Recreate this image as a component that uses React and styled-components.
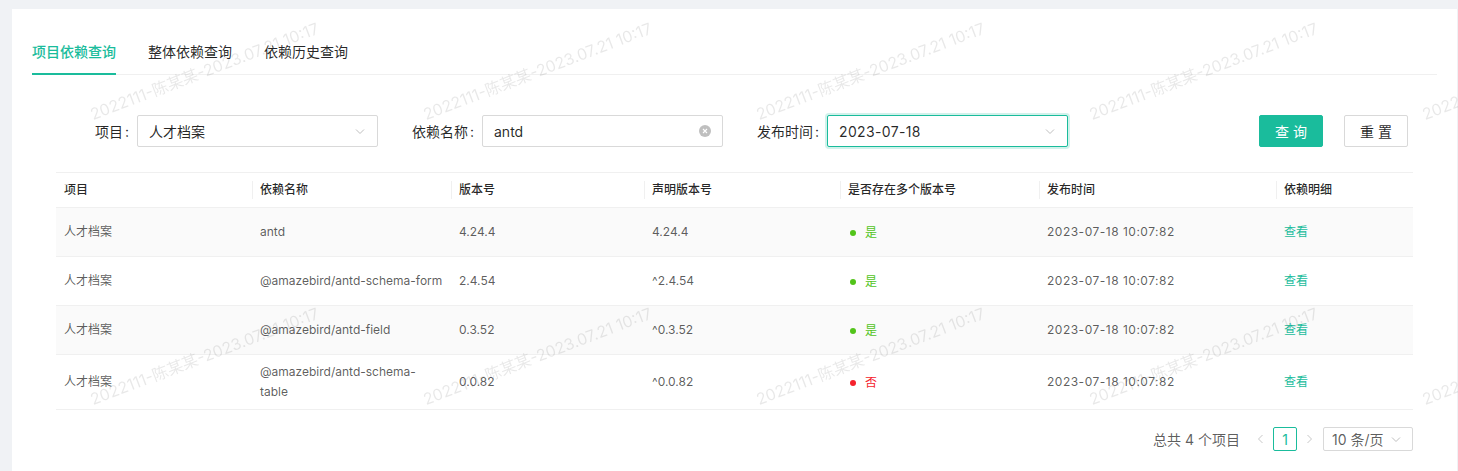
import React, { useMemo } from "react";
import styled, { createGlobalStyle } from "styled-components";

const TEAL = "#1abc9c";
const FONT = 'Inter, "Noto Sans CJK SC", sans-serif';

const GlobalStyle = createGlobalStyle`
  html, body {
    margin: 0;
    padding: 0;
    background: #f0f2f5;
    font-family: ${FONT};
    color: rgba(0, 0, 0, 0.85);
  }
  * {
    box-sizing: border-box;
  }
`;

const rows = [
  { project: "人才档案", name: "antd", version: "4.24.4", declared: "4.24.4", multi: true },
  { project: "人才档案", name: "@amazebird/antd-schema-form", version: "2.4.54", declared: "^2.4.54", multi: true },
  { project: "人才档案", name: "@amazebird/antd-field", version: "0.3.52", declared: "^0.3.52", multi: true },
  { project: "人才档案", name: "@amazebird/antd-schema-table", version: "0.0.82", declared: "^0.0.82", multi: false },
];

// name column just holds "...-form" on one line, so "...-table" breaks
const useNameWidth = () =>
  useMemo(() => {
    const ctx = document.createElement("canvas").getContext("2d");
    ctx.font = `12px ${FONT}`;
    const w = ctx.measureText("@amazebird/antd-schema-form").width;
    return Math.max(190, Math.min(204, Math.ceil(w) + 16));
  }, []);

const Chevron = ({ dir = "down", size = 12, color = "#bfbfbf" }) => {
  const d = {
    down: "M2 4.5 L6 8.5 L10 4.5",
    left: "M7.5 2 L3.5 6 L7.5 10",
    right: "M4.5 2 L8.5 6 L4.5 10",
  }[dir];
  return (
    <svg width={size} height={size} viewBox="0 0 12 12" fill="none">
      <path d={d} stroke={color} strokeWidth="1" />
    </svg>
  );
};

const ClearIcon = () => (
  <svg width="12" height="12" viewBox="0 0 12 12">
    <circle cx="6" cy="6" r="6" fill="rgba(0,0,0,0.25)" />
    <path d="M4 4 L8 8 M8 4 L4 8" stroke="#fff" strokeWidth="1.1" />
  </svg>
);

export default function App() {
  const nameWidth = useNameWidth();
  const columns = [
    { title: "项目", width: 196 },
    { title: "依赖名称", width: nameWidth },
    { title: "版本号", width: 392 - nameWidth },
    { title: "声明版本号", width: 196 },
    { title: "是否存在多个版本号", width: 199 },
    { title: "发布时间", width: 237 },
    { title: "依赖明细", width: 137 },
  ];

  const marks = [];
  for (let j = 0; j < 2; j++) {
    for (let i = 0; i < 5; i++) {
      marks.push({ left: 204 + 333 * i, top: 70 + 285 * j });
    }
  }

  return (
    <>
      <GlobalStyle />
      <Page>
        <Card>
          <TabBar>
            <Tab $active>项目依赖查询</Tab>
            <Tab>整体依赖查询</Tab>
            <Tab>依赖历史查询</Tab>
          </TabBar>

          <FilterRow>
            <FormItem>
              <Label>项目</Label>
              <Field>
                <FieldValue>人才档案</FieldValue>
                <Chevron />
              </Field>
            </FormItem>
            <FormItem>
              <Label>依赖名称</Label>
              <Field>
                <FieldValue>antd</FieldValue>
                <ClearIcon />
              </Field>
            </FormItem>
            <FormItem>
              <Label>发布时间</Label>
              <Field $focused>
                <FieldValue $spaced>2023-07-18</FieldValue>
                <Chevron />
              </Field>
            </FormItem>
            <Actions>
              <Button $primary>查 询</Button>
              <Button>重 置</Button>
            </Actions>
          </FilterRow>

          <TableWrap>
            <Table>
              <colgroup>
                {columns.map((c) => (
                  <col key={c.title} style={{ width: c.width }} />
                ))}
              </colgroup>
              <thead>
                <tr>
                  {columns.map((c, idx) => (
                    <Th key={c.title} $divider={idx > 0}>
                      {c.title}
                    </Th>
                  ))}
                </tr>
              </thead>
              <tbody>
                {rows.map((r, idx) => (
                  <Tr key={r.name} $striped={idx % 2 === 0}>
                    <Td>{r.project}</Td>
                    <Td>{r.name}</Td>
                    <Td>{r.version}</Td>
                    <Td>{r.declared}</Td>
                    <Td>
                      <Status $ok={r.multi}>{r.multi ? "是" : "否"}</Status>
                    </Td>
                    <Td $spaced>2023-07-18 10:07:82</Td>
                    <Td>
                      <LinkButton>查看</LinkButton>
                    </Td>
                  </Tr>
                ))}
              </tbody>
            </Table>

            <Pagination>
              <Total>总共 4 个项目</Total>
              <PageArrow>
                <Chevron dir="left" color="#c8c8c8" />
              </PageArrow>
              <PageItem $active>1</PageItem>
              <PageArrow>
                <Chevron dir="right" color="#c8c8c8" />
              </PageArrow>
              <SizeChanger>
                <span>10 条/页</span>
                <Chevron />
              </SizeChanger>
            </Pagination>
          </TableWrap>
        </Card>
      </Page>

      <Watermarks>
        {marks.map((m, i) => (
          <Mark key={i} style={{ left: m.left, top: m.top }}>
            2022111-陈某某-2023.07.21 10:17
          </Mark>
        ))}
      </Watermarks>
    </>
  );
}

const Page = styled.div`
  min-height: 100vh;
  padding: 9px 1px 0 12px;
  display: flex;
`;

const Card = styled.main`
  flex: 1;
  background: #fff;
  padding: 20px 20px 20px;
`;

const TabBar = styled.div`
  display: flex;
  gap: 32px;
  border-bottom: 1px solid #f0f0f0;
`;

const Tab = styled.div`
  padding: 12px 0 10px;
  margin-bottom: -1px;
  font-size: 14px;
  line-height: 22px;
  font-weight: ${(p) => (p.$active ? 500 : 400)};
  color: ${(p) => (p.$active ? TEAL : "rgba(0,0,0,0.85)")};
  border-bottom: 2px solid ${(p) => (p.$active ? TEAL : "transparent")};
`;

const FilterRow = styled.div`
  display: flex;
  align-items: center;
  margin-top: 40px;
  padding: 0 29px 0 5px;
  gap: 4px;
`;

const FormItem = styled.div`
  display: flex;
  align-items: center;
`;

const Label = styled.label`
  width: 100px;
  text-align: right;
  font-size: 14px;
  color: rgba(0, 0, 0, 0.85);
  &::after {
    content: ":";
    margin: 0 8px 0 2px;
  }
`;

const Field = styled.div`
  width: 241px;
  height: 32px;
  display: flex;
  align-items: center;
  justify-content: space-between;
  padding: 0 11px;
  border: 1px solid ${(p) => (p.$focused ? TEAL : "#d9d9d9")};
  border-radius: 2px;
  box-shadow: ${(p) => (p.$focused ? "0 0 0 2px rgba(26,188,156,0.2)" : "none")};
  background: #fff;
`;

const FieldValue = styled.span`
  font-size: 14px;
  color: rgba(0, 0, 0, 0.85);
  letter-spacing: ${(p) => (p.$spaced ? "0.35px" : "normal")};
`;

const Actions = styled.div`
  margin-left: auto;
  display: flex;
  gap: 21px;
`;

const Button = styled.button`
  width: 64px;
  height: 32px;
  border-radius: 2px;
  font-family: inherit;
  font-size: 14px;
  border: 1px solid ${(p) => (p.$primary ? TEAL : "#d9d9d9")};
  background: ${(p) => (p.$primary ? TEAL : "#fff")};
  color: ${(p) => (p.$primary ? "#fff" : "rgba(0,0,0,0.85)")};
  padding: 0;
`;

const TableWrap = styled.section`
  margin: 25px 24px 0;
`;

const Table = styled.table`
  width: 100%;
  table-layout: fixed;
  border-collapse: collapse;
  font-size: 12px;
`;

const Th = styled.th`
  position: relative;
  text-align: left;
  font-weight: 500;
  padding: 8px;
  line-height: 18px;
  color: rgba(0, 0, 0, 0.85);
  background: #fff;
  border-top: 1px solid #f0f0f0;
  border-bottom: 1px solid #f0f0f0;
  &::before {
    content: "";
    display: ${(p) => (p.$divider ? "block" : "none")};
    position: absolute;
    left: 0;
    top: 50%;
    width: 1px;
    height: 18px;
    transform: translateY(-50%);
    background: #f0f0f0;
  }
`;

const Tr = styled.tr`
  background: ${(p) => (p.$striped ? "#fafafa" : "#fff")};
`;

const Td = styled.td`
  padding: 7px 8px;
  line-height: 20px;
  color: rgba(0, 0, 0, 0.65);
  border-bottom: 1px solid #f0f0f0;
  vertical-align: middle;
  letter-spacing: ${(p) => (p.$spaced ? "0.5px" : "normal")};
`;

const Status = styled.span`
  display: inline-flex;
  align-items: center;
  gap: 9px;
  padding-left: 2px;
  color: ${(p) => (p.$ok ? "#52c41a" : "#f5222d")};
  &::before {
    content: "";
    width: 6px;
    height: 6px;
    border-radius: 50%;
    background: currentColor;
  }
`;

const LinkButton = styled.a`
  display: inline-block;
  height: 34px;
  line-height: 34px;
  color: ${TEAL};
  cursor: pointer;
`;

const Pagination = styled.div`
  display: flex;
  justify-content: flex-end;
  align-items: center;
  margin-top: 17px;
  font-size: 14px;
`;

const Total = styled.span`
  margin-right: 9px;
  color: rgba(0, 0, 0, 0.65);
`;

const PageArrow = styled.span`
  width: 24px;
  height: 24px;
  display: flex;
  align-items: center;
  justify-content: center;
`;

const PageItem = styled.span`
  width: 24px;
  height: 24px;
  display: flex;
  align-items: center;
  justify-content: center;
  border: 1px solid ${(p) => (p.$active ? TEAL : "#d9d9d9")};
  border-radius: 2px;
  color: ${(p) => (p.$active ? TEAL : "rgba(0,0,0,0.85)")};
`;

const SizeChanger = styled.div`
  margin-left: 2px;
  width: 90px;
  height: 24px;
  display: flex;
  align-items: center;
  justify-content: space-between;
  padding: 0 10px 0 8px;
  border: 1px solid #d9d9d9;
  border-radius: 2px;
  color: rgba(0, 0, 0, 0.65);
`;

const Watermarks = styled.div`
  position: fixed;
  inset: 0;
  overflow: hidden;
  pointer-events: none;
  z-index: 10;
`;

const Mark = styled.span`
  position: absolute;
  white-space: nowrap;
  font-size: 16px;
  color: rgba(0, 0, 0, 0.09);
  transform: translate(-50%, -50%) rotate(-21deg);
`;
